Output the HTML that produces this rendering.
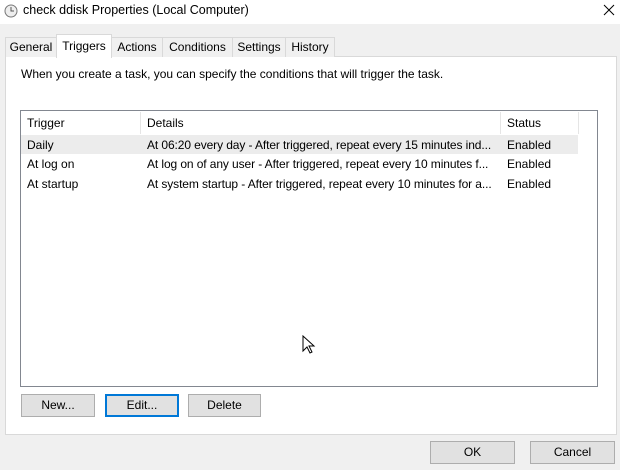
<!DOCTYPE html>
<html><head><style>
body{margin:0;width:620px;height:470px;background:#f0f0f0;font-family:"Liberation Sans",sans-serif;font-size:12px;color:#000;position:relative;overflow:hidden}
.a{position:absolute;white-space:nowrap}
.tab{position:absolute;top:37px;height:19px;border:1px solid #d9d9d9;border-bottom:none;background:#f0f0f0;line-height:18px;text-align:center}
.btn{position:absolute;height:21px;border:1px solid #adadad;background:#e1e1e1;text-align:center;line-height:21px}
.d{letter-spacing:-0.1px}
</style></head><body>
<div class="a" style="left:0;top:0;width:620px;height:24px;background:#fff"></div>
<svg class="a" style="left:4px;top:4px" width="14" height="14"><circle cx="7" cy="7" r="6" fill="#eee" stroke="#777"/><path d="M7 3v4h3" stroke="#555" fill="none"/></svg>
<div class="a" style="left:23px;top:3px;font-size:12.5px">check ddisk Properties (Local Computer)</div>
<svg class="a" style="left:603px;top:4px" width="12" height="12"><path d="M1 1L11 11M11 1L1 11" stroke="#000" stroke-width="1"/></svg>
<div class="a" style="left:5px;top:56px;width:610px;height:377px;background:#fff;border:1px solid #d9d9d9"></div>
<div class="tab" style="left:5px;width:50px">General</div>
<div class="tab" style="left:56px;top:34px;height:23px;width:54px;background:#fff;line-height:22px">Triggers</div>
<div class="tab" style="left:111px;width:50px">Actions</div>
<div class="tab" style="left:162px;width:69px">Conditions</div>
<div class="tab" style="left:232px;width:52px">Settings</div>
<div class="tab" style="left:285px;width:48px">History</div>
<div class="a" style="left:21px;top:67px">When you create a task, you can specify the conditions that will trigger the task.</div>
<div class="a" style="left:20px;top:110px;width:576px;height:275px;border:1px solid #828790;background:#fff"></div>
<div class="a" style="left:140px;top:112px;width:1px;height:22px;background:#e5e5e5"></div>
<div class="a" style="left:500px;top:112px;width:1px;height:22px;background:#e5e5e5"></div>
<div class="a" style="left:578px;top:112px;width:1px;height:22px;background:#e5e5e5"></div>
<div class="a" style="left:27px;top:116px">Trigger</div>
<div class="a" style="left:147px;top:116px">Details</div>
<div class="a" style="left:507px;top:116px">Status</div>
<div class="a" style="left:21px;top:135px;width:557px;height:19px;background:#ececec"></div>
<div class="a" style="left:27px;top:138px">Daily</div>
<div class="a d" style="left:147px;top:138px">At 06:20 every day - After triggered, repeat every 15 minutes ind...</div>
<div class="a" style="left:507px;top:138px">Enabled</div>
<div class="a" style="left:27px;top:157px">At log on</div>
<div class="a d" style="left:147px;top:157px">At log on of any user - After triggered, repeat every 10 minutes f...</div>
<div class="a" style="left:507px;top:157px">Enabled</div>
<div class="a" style="left:27px;top:177px">At startup</div>
<div class="a d" style="left:147px;top:177px">At system startup - After triggered, repeat every 10 minutes for a...</div>
<div class="a" style="left:507px;top:177px">Enabled</div>
<svg class="a" style="left:302px;top:335px" width="14" height="20"><path d="M1 1v15l4-4 3 6 2-1-3-6h5z" fill="#fff" stroke="#000"/></svg>
<div class="btn" style="left:21px;top:394px;width:72px">New...</div>
<div class="btn" style="left:105px;top:394px;width:70px;border:2px solid #0078d7;height:19px;line-height:19px">Edit...</div>
<div class="btn" style="left:188px;top:394px;width:71px">Delete</div>
<div class="btn" style="left:430px;top:441px;width:83px">OK</div>
<div class="btn" style="left:530px;top:441px;width:83px">Cancel</div>
</body></html>
